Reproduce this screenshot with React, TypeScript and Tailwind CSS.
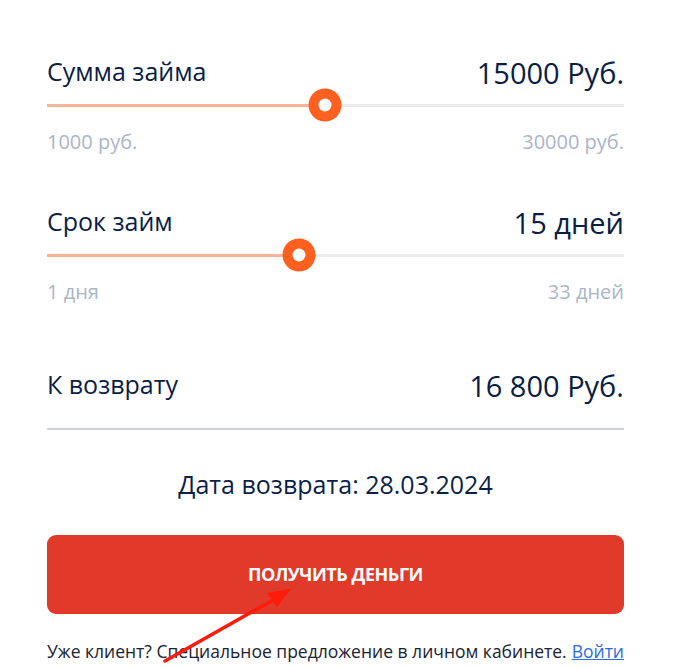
import React from "react";

const font = { fontFamily: '"Open Sans", "Noto Sans", sans-serif' };

function Slider({ fraction }: { fraction: number }) {
  return (
    <div className="relative h-[28px]">
      <div className="absolute left-0 right-0 top-[13px] h-[3px] bg-[#ebebeb]" />
      <div
        className="absolute left-0 top-[13px] h-[3px] bg-[#f9b496]"
        style={{ width: `${fraction * 100}%` }}
      />
      <div
        className="absolute top-[14px] w-[33px] h-[33px] -translate-x-1/2 -translate-y-1/2 rounded-full bg-[#ff5f1f] flex items-center justify-center"
        style={{ left: `${fraction * 100}%` }}
      >
        <div className="w-[13px] h-[13px] rounded-full bg-white" />
      </div>
    </div>
  );
}

function Header({ label, value }: { label: string; value: string }) {
  return (
    <div className="h-[36px] flex items-center justify-between text-[#0a1d45]">
      <span className="text-[25px] -mt-[3px]">{label}</span>
      <span className="text-[29px]">{value}</span>
    </div>
  );
}

function Limits({ min, max }: { min: string; max: string }) {
  return (
    <div className="h-[24px] mt-[11px] flex items-center justify-between text-[20px] text-[#abb5c8]">
      <span>{min}</span>
      <span>{max}</span>
    </div>
  );
}

export default function App() {
  return (
    <div className="w-[681px] h-[667px] bg-white overflow-hidden relative" style={font}>
      <div className="ml-[47px] w-[577px] pt-[55px] flex flex-col">
        <Header label="Сумма займа" value="15000 Руб." />
        <Slider fraction={0.482} />
        <Limits min="1000 руб." max="30000 руб." />

        <div className="mt-[51px]">
          <Header label="Срок займ" value="15 дней" />
          <Slider fraction={0.436} />
          <Limits min="1 дня" max="33 дней" />
        </div>

        <div className="mt-[64px]">
          <Header label="К возврату" value="16 800 Руб." />
        </div>
        <div className="mt-[24px] h-[2px] bg-[#cfd2dd]" />

        <div className="mt-[39px] h-[32px] flex items-center justify-center text-[25px] text-[#0b1f47]">
          Дата возврата: 28.03.2024
        </div>

        <button className="mt-[34px] h-[79px] w-full rounded-[9px] bg-[#e13a2a] text-white font-bold text-[18px] tracking-tight">
          ПОЛУЧИТЬ ДЕНЬГИ
        </button>

        <div className="mt-[25px] h-[24px] flex items-center justify-between text-[17.5px] text-[#1a2233] whitespace-nowrap">
          <span>Уже клиент? Специальное предложение в личном кабинете.</span>
          <a href="#" className="text-[#2b6be6] underline">Войти</a>
        </div>
      </div>

      <svg
        className="absolute left-0 top-0 pointer-events-none"
        width="681"
        height="667"
        viewBox="0 0 681 667"
      >
        <line x1="165" y1="661" x2="280" y2="596" stroke="#ff1a0a" strokeWidth="3.5" strokeLinecap="round" />
        <polygon points="291,589 267,593 277,607" fill="#ff1a0a" />
      </svg>
    </div>
  );
}
